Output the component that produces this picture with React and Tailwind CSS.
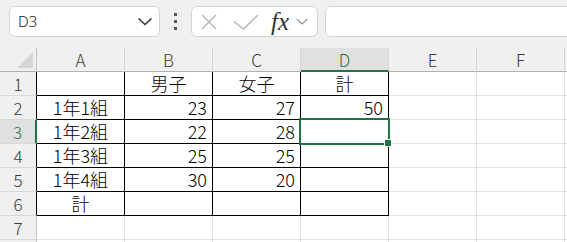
import React from "react";

const cols = ["A", "B", "C", "D", "E", "F", "G"];

const data = {
  1: { A: "", B: "男子", C: "女子", D: "計" },
  2: { A: "1年1組", B: "23", C: "27", D: "50" },
  3: { A: "1年2組", B: "22", C: "28", D: "" },
  4: { A: "1年3組", B: "25", C: "25", D: "" },
  5: { A: "1年4組", B: "30", C: "20", D: "" },
  6: { A: "計", B: "", C: "", D: "" },
};

const rows = [1, 2, 3, 4, 5, 6, 7, 8];

function Chevron({ className }) {
  return (
    <svg className={className} width="16" height="9" viewBox="0 0 16 9" fill="none">
      <path d="M1.5 1.5 8 7.5l6.5-6" stroke="currentColor" strokeWidth="1.6" />
    </svg>
  );
}

function Toolbar() {
  return (
    <div className="flex h-[48px] items-start bg-[#f0f0f0] pl-[9px] pt-[6px]">
      <div className="flex h-[31px] w-[151px] shrink-0 items-center justify-between rounded-[6px] border border-[#d4d4d4] bg-white pl-[8px] pr-[6px]">
        <span className="font-['Noto_Sans',sans-serif] text-[15px] font-light leading-none text-[#222]">D3</span>
        <Chevron className="text-[#333]" />
      </div>
      <div className="flex h-[31px] w-[31px] shrink-0 flex-col items-center justify-center gap-[4px]">
        <span className="h-[3px] w-[3px] bg-[#555]" />
        <span className="h-[3px] w-[3px] bg-[#555]" />
        <span className="h-[3px] w-[3px] bg-[#555]" />
      </div>
      <div className="flex h-[31px] w-[127px] shrink-0 items-center rounded-[6px] border border-[#d4d4d4] bg-white pl-[9px]">
        <svg width="16" height="16" viewBox="0 0 16 16" fill="none" className="text-[#b4b4b4]">
          <path d="M1 1l14 14M15 1 1 15" stroke="currentColor" strokeWidth="1.4" />
        </svg>
        <svg width="26" height="16" viewBox="0 0 26 16" fill="none" className="ml-[16px] text-[#b4b4b4]">
          <path d="M1 7.5l9.5 7.5L25 1" stroke="currentColor" strokeWidth="1.4" />
        </svg>
        <span className="ml-[12px] font-['Liberation_Serif',serif] text-[25px] italic leading-none text-[#333]">
          fx
        </span>
        <Chevron className="ml-[5px] scale-[0.8] text-[#8a8a8a]" />
      </div>
      <div className="ml-[7px] h-[31px] w-[260px] shrink-0 rounded-[6px] border border-[#d4d4d4] bg-white" />
    </div>
  );
}

function HeaderRow() {
  return (
    <div className="flex h-[24px]">
      <div className="flex w-[37px] shrink-0 items-end justify-end border-r border-b border-r-[#c4c4c4] border-b-[#b0b0b0] bg-[#f0f0f0] pb-[3px] pr-[3px]">
        <svg width="16" height="16" viewBox="0 0 16 16">
          <path d="M16 0v16H0z" fill="#d6d6d6" />
        </svg>
      </div>
      {cols.map((c) => (
        <div
          key={c}
          className={
            c === "D"
              ? "w-[88px] shrink-0 border-r border-b-2 border-r-[#d6d6d6] border-b-[#217346] bg-[#e0e0e0] text-center text-[17px] font-light leading-[23px] text-[#217346]"
              : "w-[88px] shrink-0 border-r border-b border-r-[#d6d6d6] border-b-[#b0b0b0] bg-[#f0f0f0] text-center text-[17px] font-light leading-[23px] text-[#3a3a3a]"
          }
        >
          {c === "G" ? "" : c}
        </div>
      ))}
    </div>
  );
}

function RowHeader({ r }) {
  if (r === 3) {
    return (
      <div className="w-[37px] shrink-0 border-r-2 border-b border-r-[#217346] border-b-[#d8d8d8] bg-[#e0e0e0] text-center text-[17px] font-light leading-[23px] text-[#217346]">
        {r}
      </div>
    );
  }
  const inTable = r <= 6;
  return (
    <div
      className={
        inTable
          ? "w-[37px] shrink-0 border-r border-b border-r-black border-b-[#d8d8d8] bg-[#f0f0f0] text-center text-[17px] font-light leading-[23px] text-[#3a3a3a]"
          : "w-[37px] shrink-0 border-r border-b border-r-[#c4c4c4] border-b-[#d8d8d8] bg-[#f0f0f0] text-center text-[17px] font-light leading-[23px] text-[#3a3a3a]"
      }
    >
      {r === 8 ? "" : r}
    </div>
  );
}

function Cell({ r, c }) {
  const inTable = r <= 6 && ["A", "B", "C", "D"].includes(c);
  const value = data[r]?.[c] ?? "";
  const isNumber = /^\d+$/.test(value);
  return (
    <div
      className={
        (inTable ? "border-black " : "border-[#e1e1e1] ") +
        (isNumber ? "pr-[5px] text-right " : "text-center ") +
        "h-[24px] w-[88px] shrink-0 whitespace-nowrap border-r border-b text-[18px] font-light leading-[23px] text-black"
      }
    >
      {value}
    </div>
  );
}

export default function App() {
  return (
    <div className="h-[242px] w-[567px] overflow-hidden bg-white font-['Noto_Sans_CJK_JP',sans-serif]">
      <Toolbar />
      <div className="relative">
        <HeaderRow />
        {rows.map((r) => (
          <div key={r} className="flex h-[24px]">
            <RowHeader r={r} />
            {cols.map((c) => (
              <Cell key={c} r={r} c={c} />
            ))}
          </div>
        ))}
        <div className="absolute left-[299px] top-[70px] h-[27px] w-[91px] border-2 border-[#217346]" />
        <div className="absolute left-[384px] top-[91px] h-[8px] w-[8px] border border-white bg-[#217346]" />
      </div>
    </div>
  );
}
